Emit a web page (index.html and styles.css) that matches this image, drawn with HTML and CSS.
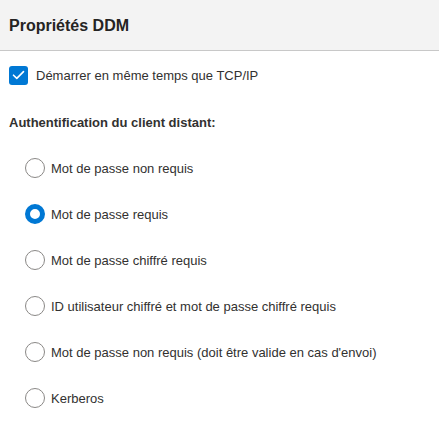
FILE: index.html
```html
<!DOCTYPE html>
<html lang="fr">
<head>
<meta charset="utf-8">
<link rel="stylesheet" href="styles.css">
</head>
<body>
<div class="header"><h1 class="title">Propriétés DDM</h1></div>
<div class="content">
  <label class="check-row">
    <span class="checkbox"><svg width="13" height="10" viewBox="0 0 13 10"><path d="M1.5 5.2 L4.8 8.4 L11.5 1.6" fill="none" stroke="#fff" stroke-width="1.6" stroke-linecap="round" stroke-linejoin="round"/></svg></span>
    <span>Démarrer en même temps que TCP/IP</span>
  </label>
  <div class="section-label">Authentification du client distant:</div>
  <div class="radios">
    <label class="radio-row"><span class="radio"></span><span>Mot de passe non requis</span></label>
    <label class="radio-row"><span class="radio checked"></span><span>Mot de passe requis</span></label>
    <label class="radio-row"><span class="radio"></span><span>Mot de passe chiffré requis</span></label>
    <label class="radio-row"><span class="radio"></span><span>ID utilisateur chiffré et mot de passe chiffré requis</span></label>
    <label class="radio-row"><span class="radio"></span><span>Mot de passe non requis (doit être valide en cas d'envoi)</span></label>
    <label class="radio-row"><span class="radio"></span><span>Kerberos</span></label>
  </div>
</div>
</body>
</html>
```
FILE: styles.css
```css
* { box-sizing: border-box; }
html, body { margin: 0; padding: 0; background: #fff; }
body { font-family: "Liberation Sans", Arial, sans-serif; color: #323130; width: 439px; height: 446px; overflow: hidden; }
.header { background: #f3f3f3; height: 51px; border-bottom: 1px solid #c8c8c8; display: flex; align-items: center; padding-left: 9px; }
.title { margin: 0; font-size: 16px; font-weight: bold; color: #252423; padding-top: 1px; }
.content { padding: 14px 9px 0 9px; }
.check-row { display: flex; align-items: center; gap: 8px; font-size: 13px; height: 20px; }
.checkbox { width: 19px; height: 19px; border-radius: 3px; background: #0078d4; display: flex; align-items: center; justify-content: center; }
.section-label { font-size: 13px; font-weight: bold; margin-top: 30px; }
.radios { display: flex; flex-direction: column; gap: 26px; padding-left: 16px; margin-top: 28px; }
.radio-row { display: flex; align-items: center; gap: 6px; font-size: 13px; height: 20px; }
.radio { width: 20px; height: 20px; border-radius: 50%; border: 1px solid #8a8886; background: #fff; }
.radio.checked { border: 5px solid #0078d4; }
```
